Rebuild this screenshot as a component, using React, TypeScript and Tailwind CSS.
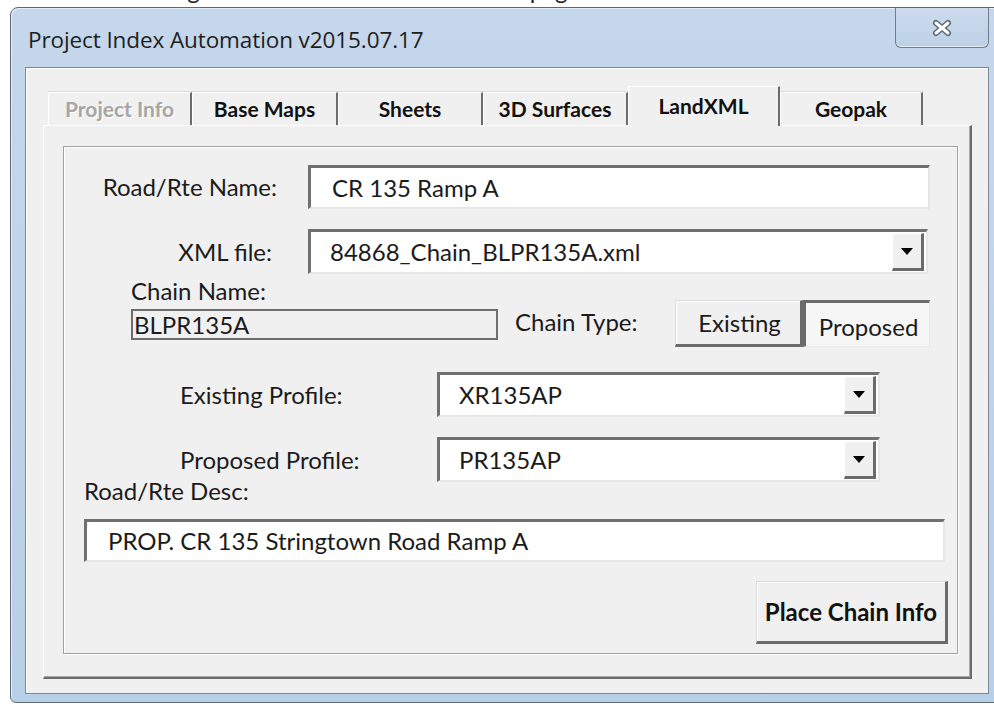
import React from 'react'

// Classic Win7-style dialog: caption bar, tab strip and the LandXML page of the form

const labelCls = "font-['Lato','Liberation_Sans',sans-serif] text-[24px] leading-[24px] text-[#1b1b1b] whitespace-nowrap"
const sunken = 'border-t-[3px] border-l-[3px] border-b-2 border-r-2 border-t-[#707070] border-l-[#707070] border-b-[#e6e6e6] border-r-[#e6e6e6] bg-white'

function DropButton() {
  return (
    <div className="w-[32px] h-[38px] my-auto mr-[2px] flex items-center justify-center bg-[#f0f0f0] border-t border-l border-b-[3px] border-r-[3px] border-t-white border-l-white border-b-[#6b6b6b] border-r-[#6b6b6b]">
      <svg width="12" height="7" viewBox="0 0 12 7">
        <path d="M0 0 H12 L6 7 Z" fill="#000" />
      </svg>
    </div>
  )
}

function Combo({ value, width }: { value: string; width: string }) {
  return (
    <div className={`${width} h-[45px] flex ${sunken}`}>
      <div className={`flex-1 flex items-center pl-[19px] ${labelCls}`}>{value}</div>
      <DropButton />
    </div>
  )
}

function Tab({ label, width, active, disabled }: { label: string; width: string; active?: boolean; disabled?: boolean }) {
  if (active) {
    return (
      <div className={`${width} h-[40px] -mb-px relative z-10 flex justify-center pt-[7px] bg-[#f0f0f0] border-t border-l border-r-2 border-t-white border-l-white border-r-[#6b6b6b] font-['Lato',sans-serif] font-bold text-[21px] leading-[24px] text-[#111]`}>
        {label}
      </div>
    )
  }
  return (
    <div
      className={`${width} h-[33px] flex items-center justify-center bg-[#f0f0f0] border-t border-l border-r-2 border-t-white border-l-white border-r-[#6b6b6b] shadow-[0_-1px_0_#dadada] font-['Lato',sans-serif] font-bold text-[21px] leading-[24px] ${
        disabled ? 'text-[#a6a6a6] [text-shadow:1px_1px_0_#ffffff]' : 'text-[#111]'
      }`}
    >
      {label}
    </div>
  )
}

export default function App() {
  return (
    <div className="w-[994px] h-[709px] bg-white overflow-hidden relative">
      {/* bottom edge of the surrounding document's text line */}
      <div className="h-[7px] overflow-hidden relative">
        <div className="flex font-['Lato',sans-serif] text-[24px] leading-[24px] text-[#222] -mt-[22px]">
          <span className="ml-[168px]">ing</span>
          <span className="ml-[330px]">page</span>
        </div>
      </div>

      {/* window */}
      <div className="ml-[10px] w-[993px] h-[696px] border border-[#5f6975] rounded-tl-[8px] rounded-bl-[6px] bg-gradient-to-b from-[#c5d7eb] via-[#bfd3ea] to-[#b8cfe8] shadow-[inset_1px_1px_0_#e2ecf6] px-[14px] flex flex-col">
        {/* caption */}
        <div className="h-[59px] flex items-start justify-between">
          <div className="pt-[18px] pl-[3px] font-['Open_Sans',sans-serif] text-[22.5px] leading-[28px] text-[#1e1e1e] tracking-[-0.1px]">
            Project Index Automation v2015.07.17
          </div>
          <div className="w-[94px] h-[40px] mr-[-1px] rounded-b-[6px] border border-t-0 border-[#6f7c8c] bg-gradient-to-b from-[#cddcee] to-[#bdd0e6] shadow-[inset_0_-1px_0_#e4edf7] flex items-center justify-center">
            <svg width="22" height="18" viewBox="0 0 22 18">
              <path d="M5 4 L17 14 M17 4 L5 14" stroke="#5d6773" strokeWidth="6" strokeLinecap="round" />
              <path d="M5 4 L17 14 M17 4 L5 14" stroke="#ffffff" strokeWidth="3" strokeLinecap="round" />
            </svg>
          </div>
        </div>

        {/* client area */}
        <div className="w-[964px] h-[627px] border border-[#7a8898] bg-[#f0f0f0] shadow-[inset_1px_1px_0_#ffffff] pl-[17px] pt-[19px]">
          {/* tab strip */}
          <div className="h-[38px] flex items-end pl-[5px]">
            <Tab label="Project Info" width="w-[144px]" disabled />
            <Tab label="Base Maps" width="w-[146px]" />
            <Tab label="Sheets" width="w-[145px]" />
            <Tab label="3D Surfaces" width="w-[145px]" />
            <Tab label="LandXML" width="w-[152px]" active />
            <Tab label="Geopak" width="w-[143px]" />
          </div>

          {/* multipage body */}
          <div className="w-[929px] h-[554px] border-t border-l border-r-2 border-b-2 border-t-white border-l-white border-r-[#6b6b6b] border-b-[#6b6b6b] shadow-[inset_-1px_-1px_0_#a8a8a8] pl-[19px] pt-[20px]">
            {/* page frame */}
            <div className="w-[895px] h-[508px] border border-[#a2a2a2] shadow-[inset_1px_1px_0_#ffffff,1px_1px_0_#ffffff] flex flex-col">
              {/* Road/Rte Name */}
              <div className="mt-[18px] flex items-center">
                <div className={`w-[213px] text-right ${labelCls}`}>Road/Rte Name:</div>
                <div className={`ml-[31px] w-[622px] h-[44px] flex items-center pl-[21px] ${sunken} ${labelCls}`}>CR 135 Ramp A</div>
              </div>

              {/* XML file */}
              <div className="mt-[20px] flex items-center">
                <div className={`w-[208px] text-right ${labelCls}`}>XML file:</div>
                <div className="ml-[36px]">
                  <Combo value="84868_Chain_BLPR135A.xml" width="w-[620px]" />
                </div>
              </div>

              {/* Chain name / chain type */}
              <div className="mt-[5px] flex items-start">
                <div className="ml-[67px] flex flex-col">
                  <div className={labelCls}>Chain Name:</div>
                  <div className={`mt-[6px] w-[367px] h-[31px] border-2 border-[#6e6e6e] bg-[#f0f0f0] flex items-center pl-[1px] ${labelCls}`}>BLPR135A</div>
                </div>
                <div className={`ml-[17px] mt-[31px] ${labelCls}`}>Chain Type:</div>
                <div className="ml-[37px] mt-[21px] flex">
                  <div className={`w-[128px] h-[47px] flex items-center justify-center pl-[4px] bg-[#f0f0f0] border-t border-l border-b-[3px] border-r-[3px] border-t-[#dcdcdc] border-l-[#dcdcdc] border-b-[#6b6b6b] border-r-[#6b6b6b] shadow-[inset_1px_1px_0_#ffffff] ${labelCls}`}>
                    Existing
                  </div>
                  <div className={`w-[127px] h-[47px] flex items-center justify-center pt-[4px] pl-[3px] bg-[#f6f6f6] border-t-[3px] border-l-[3px] border-b border-r border-t-[#6b6b6b] border-l-[#6b6b6b] border-b-[#e8e8e8] border-r-[#e8e8e8] ${labelCls}`}>
                    Proposed
                  </div>
                </div>
              </div>

              {/* Existing Profile */}
              <div className="mt-[25px] flex items-center">
                <div className={`ml-[116px] w-[257px] ${labelCls}`}>Existing Profile:</div>
                <Combo value="XR135AP" width="w-[443px]" />
              </div>

              {/* Proposed Profile */}
              <div className="mt-[20px] flex items-center">
                <div className={`ml-[116px] w-[257px] ${labelCls}`}>Proposed Profile:</div>
                <Combo value="PR135AP" width="w-[443px]" />
              </div>

              {/* Road/Rte Desc */}
              <div className={`ml-[20px] h-[18px] !leading-[18px] ${labelCls}`}>Road/Rte Desc:</div>
              <div className={`mt-[19px] ml-[20px] w-[861px] h-[43px] flex items-center pl-[21px] ${sunken} ${labelCls}`}>
                PROP. CR 135 Stringtown Road Ramp A
              </div>

              {/* action */}
              <div className="mt-[19px] ml-[692px] w-[192px] h-[63px] flex items-center justify-center bg-[#f0f0f0] border-t border-l border-b-[3px] border-r-[3px] border-t-[#dcdcdc] border-l-[#dcdcdc] border-b-[#6b6b6b] border-r-[#6b6b6b] shadow-[inset_1px_1px_0_#ffffff] font-['Lato',sans-serif] font-bold text-[24px] leading-[24px] text-[#111] whitespace-nowrap">
                Place Chain Info
              </div>
            </div>
          </div>
        </div>
      </div>
    </div>
  )
}
